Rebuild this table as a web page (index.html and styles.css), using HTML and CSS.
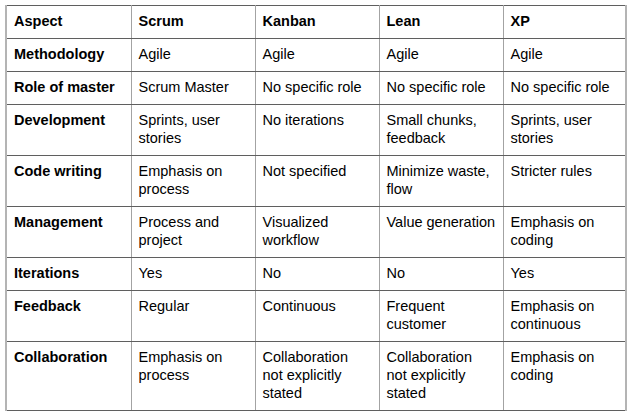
FILE: index.html
```html
<!DOCTYPE html>
<html lang="en">
<head>
<meta charset="utf-8">
<title>Agile methodologies comparison</title>
<link rel="stylesheet" href="styles.css">
</head>
<body>
<table class="cmp">
  <colgroup>
    <col class="c1"><col class="c2"><col class="c3"><col class="c4"><col class="c5">
  </colgroup>
  <thead>
    <tr><th>Aspect</th><th>Scrum</th><th>Kanban</th><th>Lean</th><th>XP</th></tr>
  </thead>
  <tbody>
    <tr><th>Methodology</th><td>Agile</td><td>Agile</td><td>Agile</td><td>Agile</td></tr>
    <tr><th>Role of master</th><td>Scrum Master</td><td>No specific role</td><td>No specific role</td><td>No specific role</td></tr>
    <tr><th>Development</th><td>Sprints, user stories</td><td>No iterations</td><td>Small chunks, feedback</td><td>Sprints, user stories</td></tr>
    <tr><th>Code writing</th><td>Emphasis on process</td><td>Not specified</td><td>Minimize waste, flow</td><td>Stricter rules</td></tr>
    <tr><th>Management</th><td>Process and project</td><td>Visualized workflow</td><td>Value generation</td><td>Emphasis on coding</td></tr>
    <tr><th>Iterations</th><td>Yes</td><td>No</td><td>No</td><td>Yes</td></tr>
    <tr><th>Feedback</th><td>Regular</td><td>Continuous</td><td>Frequent customer</td><td>Emphasis on continuous</td></tr>
    <tr><th>Collaboration</th><td>Emphasis on process</td><td>Collaboration not explicitly stated</td><td>Collaboration not explicitly stated</td><td>Emphasis on coding</td></tr>
  </tbody>
</table>
</body>
</html>
```
FILE: styles.css
```css
html, body {
  margin: 0;
  background: #ffffff;
}
body {
  padding: 5px 0 0 5px;
  font-family: "Liberation Sans", Arial, sans-serif;
  font-size: 14.5px;
  line-height: 18px;
  color: #000;
}
.cmp {
  border-collapse: collapse;
  table-layout: fixed;
  width: 620px;
}
.c1 { width: 125px; }
.c2 { width: 124px; }
.c3 { width: 124px; }
.c4 { width: 124px; }
.c5 { width: 123px; }
.cmp th,
.cmp td {
  text-align: left;
  vertical-align: top;
  padding: 6px 7px 8px 7px;
  border-top: 1px solid #5f5f5f;
  border-bottom: 1px solid #5f5f5f;
  border-left: 1px solid #a3a3a3;
  border-right: 1px solid #a3a3a3;
}
.cmp th {
  font-weight: bold;
}
.cmp td {
  font-weight: normal;
}
.cmp tr > :first-child {
  border-left: 2px solid #b4b4b4;
}
.cmp tr > :last-child {
  border-right: 2px solid #b4b4b4;
}
```
